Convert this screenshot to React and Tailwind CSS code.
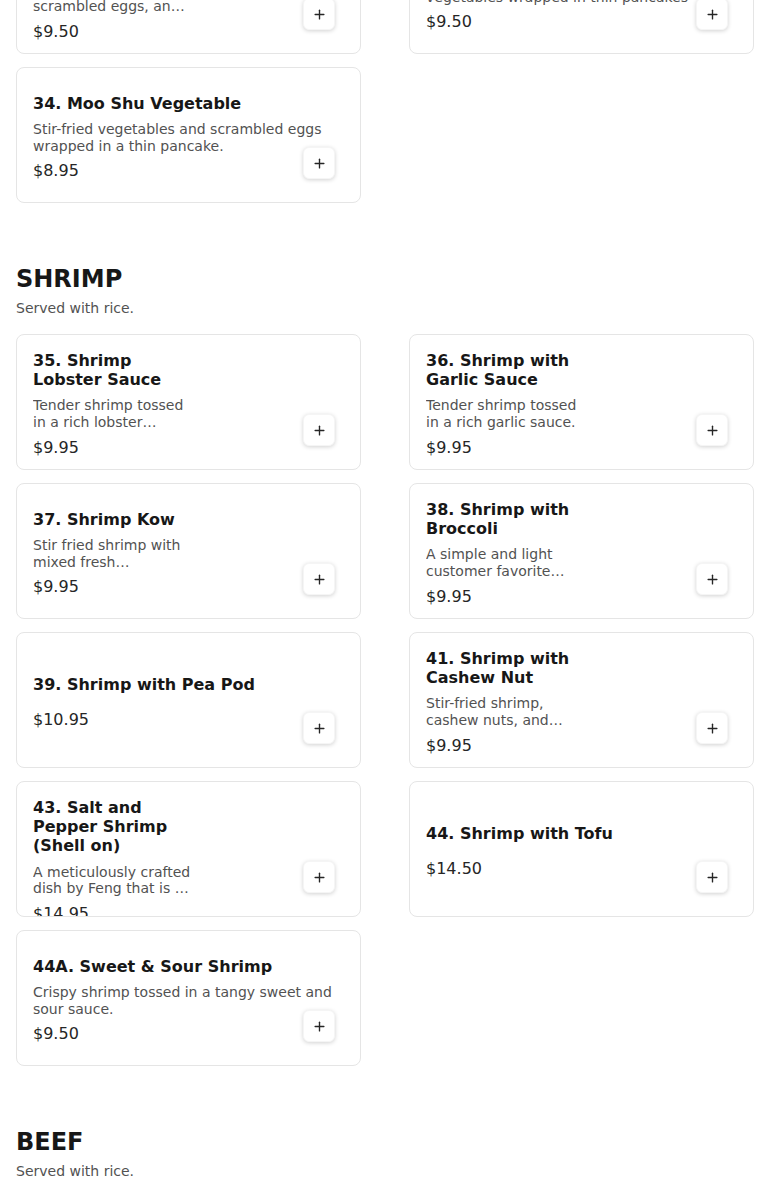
import React from "react";
import { Plus } from "lucide-react";

function Card({ title, desc, price, narrow }) {
  return (
    <div className="relative flex h-[136px] flex-col overflow-hidden rounded-lg border border-neutral-200 bg-white px-4 pt-4 pb-3">
      <div className={narrow ? "my-auto w-[164px]" : "my-auto w-full"}>
        <h3 className="text-[16px] font-bold leading-[1.2] text-neutral-900">{title}</h3>
        {desc ? (
          <p className="mt-2 line-clamp-2 text-[14px] leading-[1.2] text-neutral-600">{desc}</p>
        ) : (
          <div className="h-[1px]" />
        )}
        <p className={desc ? "mt-[7px] text-[16px] leading-[1.2] text-neutral-800" : "mt-[14px] text-[16px] leading-[1.2] text-neutral-800"}>{price}</p>
      </div>
      <button className="absolute bottom-[23px] right-[25px] flex h-8 w-8 items-center justify-center rounded-md border border-neutral-100 bg-white text-neutral-800 shadow-[0_1px_4px_rgba(0,0,0,0.18)]">
        <Plus size={15} strokeWidth={2.2} />
      </button>
    </div>
  );
}

function Grid({ items }) {
  return (
    <div className="grid grid-cols-2 gap-x-12 gap-y-[13px]">
      {items.map((it, i) => (
        <Card key={i} {...it} />
      ))}
    </div>
  );
}

function Section({ name, note, items }) {
  return (
    <section className="mt-[60px]">
      <h2 className="text-[24px] font-bold leading-8 text-neutral-900">{name}</h2>
      <p className="mt-[3px] text-[14px] leading-5 text-neutral-600">{note}</p>
      <div className="mt-[16px]">
        <Grid items={items} />
      </div>
    </section>
  );
}

const mooShu = [
  {
    title: "32. Moo Shu Chicken",
    desc: "Shredded chicken with scrambled eggs, an…",
    price: "$9.50",
    narrow: true,
  },
  {
    title: "33. Moo Shu Pork",
    desc: "Shredded pork and scrambled eggs with vegetables wrapped in thin pancakes",
    price: "$9.50",
  },
  {
    title: "34. Moo Shu Vegetable",
    desc: "Stir-fried vegetables and scrambled eggs wrapped in a thin pancake.",
    price: "$8.95",
  },
];

const shrimp = [
  {
    title: "35. Shrimp Lobster Sauce",
    desc: "Tender shrimp tossed in a rich lobster…",
    price: "$9.95",
    narrow: true,
  },
  {
    title: "36. Shrimp with Garlic Sauce",
    desc: "Tender shrimp tossed in a rich garlic sauce.",
    price: "$9.95",
    narrow: true,
  },
  {
    title: "37. Shrimp Kow",
    desc: "Stir fried shrimp with mixed fresh…",
    price: "$9.95",
    narrow: true,
  },
  {
    title: "38. Shrimp with Broccoli",
    desc: "A simple and light customer favorite…",
    price: "$9.95",
    narrow: true,
  },
  { title: "39. Shrimp with Pea Pod", desc: "", price: "$10.95" },
  {
    title: "41. Shrimp with Cashew Nut",
    desc: "Stir-fried shrimp, cashew nuts, and…",
    price: "$9.95",
    narrow: true,
  },
  {
    title: "43. Salt and Pepper Shrimp (Shell on)",
    desc: "A meticulously crafted dish by Feng that is …",
    price: "$14.95",
    narrow: true,
  },
  { title: "44. Shrimp with Tofu", desc: "", price: "$14.50" },
  {
    title: "44A. Sweet & Sour Shrimp",
    desc: "Crispy shrimp tossed in a tangy sweet and sour sauce.",
    price: "$9.50",
  },
];

const beef = [
  {
    title: "45. Beef with Broccoli",
    desc: "Tender sliced beef stir-fried with fresh broccoli.",
    price: "$10.50",
  },
  { title: "46. Pepper Steak", desc: "", price: "$10.50" },
];

export default function App() {
  return (
    <div className="min-h-screen bg-white font-['DejaVu_Sans',sans-serif]">
      <div className="-mt-[82px] px-4 pb-10">
        <Grid items={mooShu} />
        <Section name="SHRIMP" note="Served with rice." items={shrimp} />
        <Section name="BEEF" note="Served with rice." items={beef} />
      </div>
    </div>
  );
}
